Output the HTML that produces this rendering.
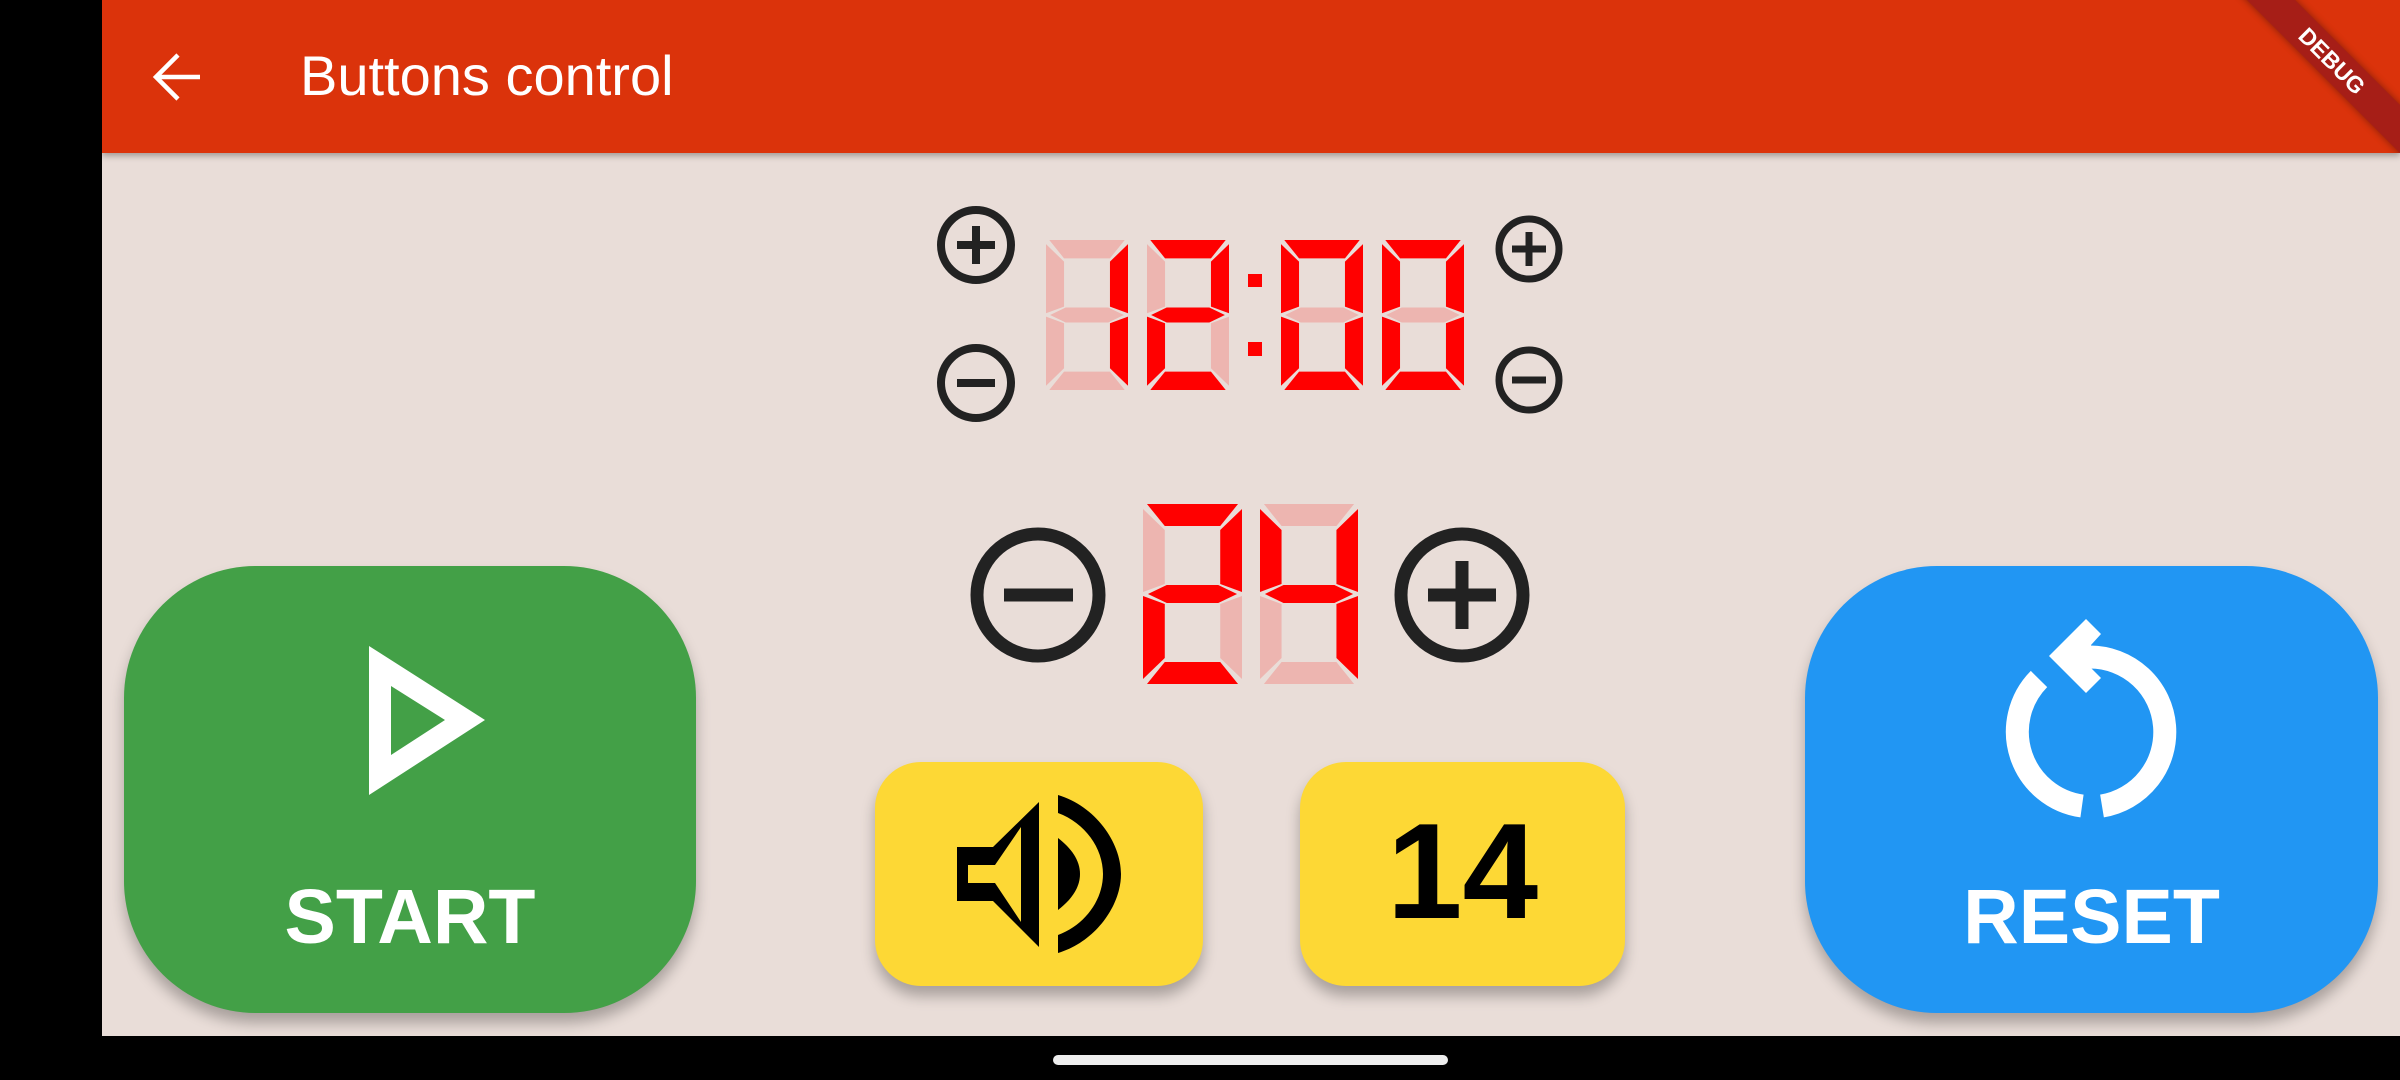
<!DOCTYPE html>
<html><head><meta charset="utf-8"><style>
html,body{margin:0;padding:0;width:2400px;height:1080px;overflow:hidden;background:#000;font-family:"Liberation Sans",sans-serif}
#body{position:absolute;left:102px;top:0;width:2298px;height:1036px;background:#E9DDD8}
#bar{position:absolute;left:102px;top:0;width:2298px;height:153px;background:#DB330B;box-shadow:0 3px 6px rgba(0,0,0,.3);overflow:hidden}
#title{position:absolute;left:300px;top:44px;color:#fff;font-size:56px;line-height:64px}
.btn{position:absolute;box-shadow:0 10px 14px rgba(0,0,0,.28)}
.lbl{position:absolute;color:#fff;font-weight:bold;font-size:77px;text-align:center;width:100%;line-height:83px}
#banner{position:absolute;left:2080px;top:44px;width:300px;height:34px;background:#A61E17;transform:rotate(45deg);color:#fff;font-weight:bold;font-size:23px;text-align:center;line-height:34px;box-shadow:0 0 8px rgba(0,0,0,.4)}
</style></head><body>
<div id="body"></div>
<div id="bar"><div id="banner">DEBUG</div></div>
<div id="title">Buttons control</div>
<div class="btn" style="left:124px;top:566px;width:572px;height:447px;background:#43A047;border-radius:132px">
 <div class="lbl" style="top:310px">START</div></div>
<div class="btn" style="left:1805px;top:566px;width:573px;height:447px;background:#2196F3;border-radius:132px">
 <div class="lbl" style="top:310px">RESET</div></div>
<div class="btn" style="left:875px;top:762px;width:328px;height:224px;background:#FDD835;border-radius:46px"></div>
<div class="btn" style="left:1300px;top:762px;width:325px;height:224px;background:#FDD835;border-radius:46px">
 <div style="position:absolute;width:100%;top:34px;text-align:center;font-weight:bold;font-size:136px;line-height:150px;color:#000">14</div></div>
<div style="position:absolute;left:1053px;top:1055px;width:395px;height:10px;border-radius:5px;background:#eee"></div>
<svg width="2400" height="1080" style="position:absolute;left:0;top:0" xmlns="http://www.w3.org/2000/svg">
<defs>
<g id="a"><polygon points="4,0 96,0 78,22 22,22"/></g>
<g id="b"><polygon points="100,5 100,88 78,80 78,26"/></g>
<g id="c"><polygon points="100,92 100,175 78,154 78,100"/></g>
<g id="d"><polygon points="4,180 96,180 78,158 22,158"/></g>
<g id="e"><polygon points="0,92 22,100 22,154 0,175"/></g>
<g id="f"><polygon points="0,5 22,26 22,80 0,88"/></g>
<g id="g"><polygon points="5,90 24,81 76,81 95,90 76,99 24,99"/></g>
</defs>
<g stroke="#fff" stroke-width="4.5" fill="none"><path d="M156 77H200M178 55L156 77L178 99"/></g>
<g transform="translate(1046,240) scale(0.82,0.833)">
 <g fill="#EDB5B0"><use href="#a"/><use href="#d"/><use href="#e"/><use href="#f"/><use href="#g"/></g>
 <g fill="#f00"><use href="#b"/><use href="#c"/></g></g>
<g transform="translate(1147,240) scale(0.82,0.833)">
 <g fill="#EDB5B0"><use href="#c"/><use href="#f"/></g>
 <g fill="#f00"><use href="#a"/><use href="#b"/><use href="#g"/><use href="#e"/><use href="#d"/></g></g>
<g transform="translate(1281,240) scale(0.82,0.833)">
 <g fill="#EDB5B0"><use href="#g"/></g>
 <g fill="#f00"><use href="#a"/><use href="#b"/><use href="#c"/><use href="#d"/><use href="#e"/><use href="#f"/></g></g>
<g transform="translate(1382,240) scale(0.82,0.833)">
 <g fill="#EDB5B0"><use href="#g"/></g>
 <g fill="#f00"><use href="#a"/><use href="#b"/><use href="#c"/><use href="#d"/><use href="#e"/><use href="#f"/></g></g>
<rect x="1248" y="274" width="14" height="13" fill="#f00"/><rect x="1248" y="342" width="14" height="14" fill="#f00"/>
<g transform="translate(1143,504) scale(0.99,1)">
 <g fill="#EDB5B0"><use href="#c"/><use href="#f"/></g>
 <g fill="#f00"><use href="#a"/><use href="#b"/><use href="#g"/><use href="#e"/><use href="#d"/></g></g>
<g transform="translate(1260,504) scale(0.98,1)">
 <g fill="#EDB5B0"><use href="#a"/><use href="#d"/><use href="#e"/></g>
 <g fill="#f00"><use href="#f"/><use href="#b"/><use href="#g"/><use href="#c"/></g></g>
<g stroke="#222" fill="none">
 <circle cx="976" cy="245" r="35" stroke-width="8"/><circle cx="976" cy="383" r="35" stroke-width="8"/>
 <circle cx="1529" cy="249" r="30" stroke-width="7"/><circle cx="1529" cy="380" r="30" stroke-width="7"/>
 <circle cx="1038" cy="595" r="61" stroke-width="13"/><circle cx="1462" cy="595" r="61" stroke-width="13"/>
 <path d="M957 245H995M976 226V264M957 383H995" stroke-width="8"/>
 <path d="M1512 249H1546M1529 232V266M1512 380H1546" stroke-width="7"/>
 <path d="M1004 595H1073M1428 595H1496M1462 561V629" stroke-width="13"/>
</g>
<path fill="#fff" fill-rule="evenodd" d="M369 646L485 720L369 795ZM391 686L391 755L445 720Z"/>
<g fill="none" stroke="#fff" stroke-width="23"><path d="M2090 657A75 75 0 0 1 2102 806"/><path d="M2082 806A75 75 0 0 1 2039 679"/></g>
<polygon fill="#fff" points="2049,656 2086,619 2101,634 2091,645 2091,668 2101,678 2086,693"/>
<path fill="#000" fill-rule="evenodd" d="M957 847H993L1039 802V947L993 901H957ZM968 865V883H995L1021 922V827L995 865Z"/>
<path fill="#000" d="M1058 795C1095 806 1121 842 1121 874C1121 906 1095 942 1058 953V935C1085 925 1103 900 1103 874C1103 848 1085 823 1058 813Z"/>
<path fill="#000" d="M1058 838C1071 848 1080 860 1080 874C1080 888 1071 900 1058 910Z"/>
</svg>
</body></html>
